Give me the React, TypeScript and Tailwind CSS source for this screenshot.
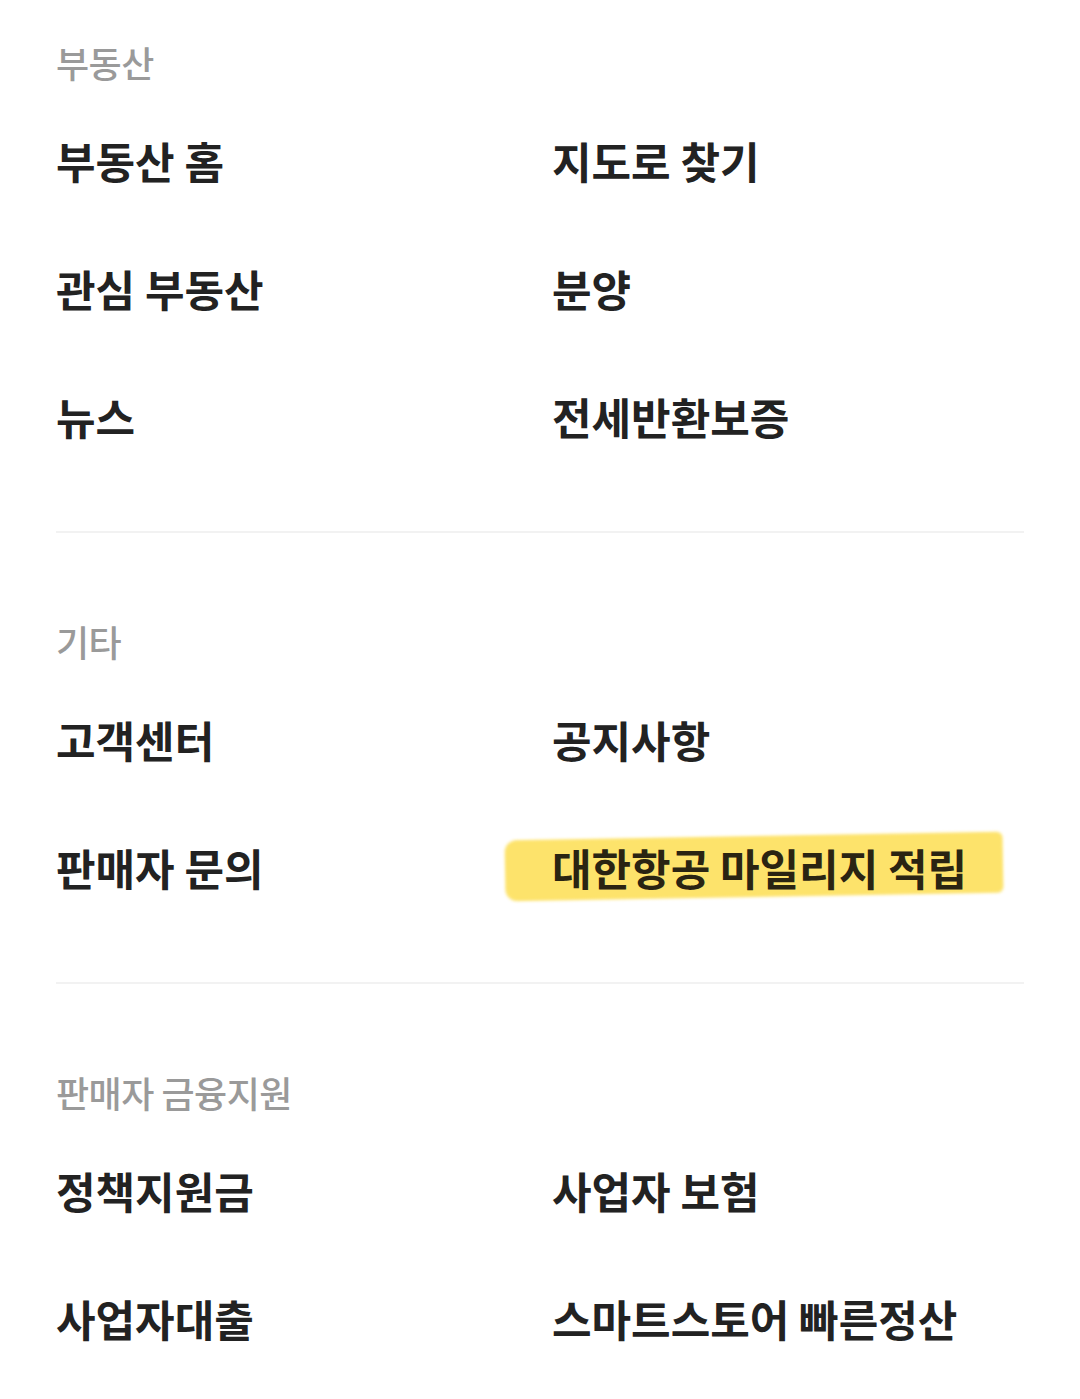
import React from 'react';

const sections = [
  {
    title: '부동산',
    items: ['부동산 홈', '지도로 찾기', '관심 부동산', '분양', '뉴스', '전세반환보증'],
  },
  {
    title: '기타',
    items: ['고객센터', '공지사항', '판매자 문의', '대한항공 마일리지 적립'],
  },
  {
    title: '판매자 금융지원',
    items: ['정책지원금', '사업자 보험', '사업자대출', '스마트스토어 빠른정산'],
  },
];

const Highlighted = ({ children }: { children: React.ReactNode }) => (
  <span className="relative inline-block">
    {/* brush-like marker stroke */}
    <span className="absolute left-[-47px] right-[-36px] top-[1px] bottom-[3px] -rotate-1 rounded-l-[12px] rounded-r-[6px] bg-[#fde36b] blur-[1.5px]" />
    <span className="relative text-[#2a2412]">{children}</span>
  </span>
);

export default function App() {
  return (
    <div
      className="min-h-[1399px] bg-white px-14 pt-[38px]"
      style={{ fontFamily: '"Noto Sans CJK KR", "Noto Sans", sans-serif' }}
    >
      {sections.map((section, si) => (
        <div key={section.title}>
          {si > 0 && <div className="mt-[49px] mb-[84px] h-[2px] bg-[#f2f2f2]" />}
          <div className="h-[48px] text-[36px] font-medium leading-[48px] tracking-[-0.5px] text-[#9a9a9a]">
            {section.title}
          </div>
          <div className="mt-[12px] grid grid-cols-[496px_1fr]">
            {section.items.map((item) => (
              <div
                key={item}
                className="flex h-[128px] items-center pb-[4px] text-[43px] font-bold text-[#222222]"
              >
                {item === '대한항공 마일리지 적립' ? <Highlighted>{item}</Highlighted> : item}
              </div>
            ))}
          </div>
        </div>
      ))}
    </div>
  );
}
